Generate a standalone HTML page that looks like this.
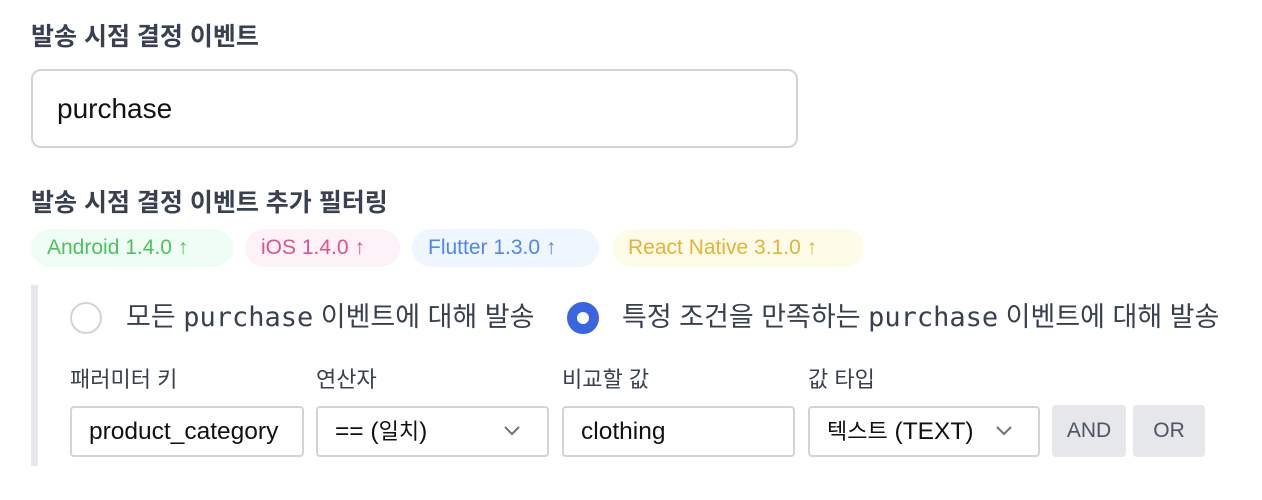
<!DOCTYPE html>
<html><head><meta charset="utf-8"><style>
*{box-sizing:border-box;margin:0;padding:0}
body{width:1262px;height:500px;background:#fff;font-family:"Liberation Sans","Noto Sans CJK KR",sans-serif;color:#111827;position:relative;overflow:hidden}
.a{position:absolute}
.t{font-weight:bold;font-size:25px;color:#374151;line-height:30px}
.badge{position:absolute;top:229px;height:38px;border-radius:19px;font-size:21px;line-height:38px;padding-left:16px}
.lbl{position:absolute;top:366px;font-size:22px;color:#374151;line-height:28px}
.inp{position:absolute;top:406px;height:51px;border:2px solid #d1d5db;border-radius:4px;font-size:24.5px;line-height:47px;padding-left:17px;color:#111;white-space:nowrap}
.k{font-size:22px}
.btn{position:absolute;top:405px;height:52px;background:#e5e7eb;border-radius:4px;font-size:21px;line-height:52px;text-align:center;color:#4b5563}
.mono{font-family:"DejaVu Sans Mono","Liberation Mono",monospace;font-size:27px}
.rt{position:absolute;top:299px;font-size:27px;color:#374151;line-height:36px;white-space:nowrap}
</style></head><body>
<div class="a t" style="left:31px;top:22px">발송 시점 결정 이벤트</div>
<div class="a" style="left:31px;top:69px;width:767px;height:79px;border:2px solid #d1d5db;border-radius:10px;font-size:28px;line-height:75px;padding-left:24px;color:#111">purchase</div>
<div class="a t" style="left:31px;top:188px">발송 시점 결정 이벤트 추가 필터링</div>
<div class="badge" style="left:31px;width:202px;background:#f0fdf4;color:#4cc35e">Android 1.4.0 ↑</div>
<div class="badge" style="left:245px;width:155px;background:#fdf2f8;color:#e0508f">iOS 1.4.0 ↑</div>
<div class="badge" style="left:412px;width:187px;background:#eff6ff;color:#4f86f0">Flutter 1.3.0 ↑</div>
<div class="badge" style="left:612px;width:252px;background:#fefce8;color:#e5b235">React Native 3.1.0 ↑</div>
<div class="a" style="left:31px;top:285px;width:7px;height:181px;background:#e5e7eb"></div>
<div class="a" style="left:70px;top:302px;width:32px;height:32px;border:2px solid #d1d5db;border-radius:50%"></div>
<div class="rt" style="left:126px">모든 <span class="mono">purchase</span> 이벤트에 대해 발송</div>
<div class="a" style="left:567px;top:302px;width:32px;height:32px;border:10px solid #3b65e0;border-radius:50%;background:#fff"></div>
<div class="rt" style="left:622px">특정 조건을 만족하는 <span class="mono">purchase</span> 이벤트에 대해 발송</div>
<div class="lbl" style="left:70px">패러미터 키</div>
<div class="lbl" style="left:316px">연산자</div>
<div class="lbl" style="left:562px">비교할 값</div>
<div class="lbl" style="left:808px">값 타입</div>
<div class="inp" style="left:70px;width:234px">product_category</div>
<div class="inp" style="left:316px;width:233px">== (<span class="k">일치</span>)<svg class="a" style="left:184px;top:17px" width="20" height="12" viewBox="0 0 20 12"><path d="M3 2l7 7 7-7" fill="none" stroke="#6b7280" stroke-width="2"/></svg></div>
<div class="inp" style="left:562px;width:233px">clothing</div>
<div class="inp" style="left:808px;width:232px"><span class="k">텍스트</span> (TEXT)<svg class="a" style="left:184px;top:17px" width="20" height="12" viewBox="0 0 20 12"><path d="M3 2l7 7 7-7" fill="none" stroke="#6b7280" stroke-width="2"/></svg></div>
<div class="btn" style="left:1052px;width:74px">AND</div>
<div class="btn" style="left:1133px;width:72px">OR</div>
</body></html>
